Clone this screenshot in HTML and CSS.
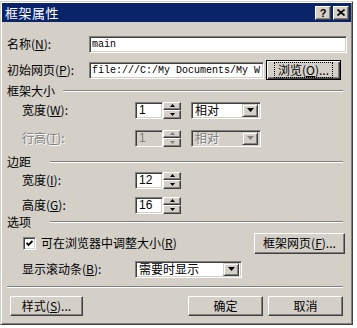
FILE: index.html
```html
<!DOCTYPE html>
<html>
<head>
<meta charset="utf-8">
<title>框架属性</title>
<link rel="stylesheet" href="styles.css">
</head>
<body>
<div class="window">
  <div class="titlebar">
    <span class="title">框架属性</span>
    <div class="tbtns">
      <div class="tbtn help">?</div>
      <div class="tbtn close">
        <svg width="8" height="7" viewBox="0 0 8 7"><path d="M0.5 0.5 L7.5 6.5 M7.5 0.5 L0.5 6.5" stroke="#000" stroke-width="1.6" fill="none"/></svg>
      </div>
    </div>
  </div>
  <div class="content">
    <div class="row r-name">
      <span class="lbl lbl-top">名称(<u>N</u>):</span>
      <div class="field text-field f-name">main</div>
    </div>
    <div class="row r-page">
      <span class="lbl lbl-top">初始网页(<u>P</u>):</span>
      <div class="field text-field f-page">file:///C:/My Documents/My W</div>
      <div class="btn default b-browse"><span class="focus">浏览(<u>O</u>)...</span></div>
    </div>

    <div class="group g-size">
      <span class="group-label">框架大小</span>
      <span class="group-line"></span>
    </div>
    <div class="row r-w">
      <span class="lbl lbl-sub">宽度(<u>W</u>):</span>
      <div class="field num-field">1</div>
      <div class="spinner">
        <div class="spin-btn"><svg width="5" height="3" viewBox="0 0 5 3"><path d="M2.5 0 L5 3 L0 3 Z" fill="#000"/></svg></div>
        <div class="spin-btn"><svg width="5" height="3" viewBox="0 0 5 3"><path d="M0 0 L5 0 L2.5 3 Z" fill="#000"/></svg></div>
      </div>
      <div class="field combo c-unit">
        <span class="combo-text">相对</span>
        <div class="drop-btn"><svg width="7" height="4" viewBox="0 0 7 4"><path d="M0 0 L7 0 L3.5 4 Z" fill="#000"/></svg></div>
      </div>
    </div>
    <div class="row r-h disabled">
      <span class="lbl lbl-sub">行高(<u>T</u>):</span>
      <div class="field num-field">1</div>
      <div class="spinner">
        <div class="spin-btn"><svg width="5" height="3" viewBox="0 0 5 3"><path d="M2.5 0 L5 3 L0 3 Z" fill="#808080"/></svg></div>
        <div class="spin-btn"><svg width="5" height="3" viewBox="0 0 5 3"><path d="M0 0 L5 0 L2.5 3 Z" fill="#808080"/></svg></div>
      </div>
      <div class="field combo c-unit">
        <span class="combo-text">相对</span>
        <div class="drop-btn"><svg width="7" height="4" viewBox="0 0 7 4"><path d="M0 0 L7 0 L3.5 4 Z" fill="#808080"/></svg></div>
      </div>
    </div>

    <div class="group g-margin">
      <span class="group-label">边距</span>
      <span class="group-line"></span>
    </div>
    <div class="row r-mw">
      <span class="lbl lbl-sub">宽度(<u>I</u>):</span>
      <div class="field num-field">12</div>
      <div class="spinner">
        <div class="spin-btn"><svg width="5" height="3" viewBox="0 0 5 3"><path d="M2.5 0 L5 3 L0 3 Z" fill="#000"/></svg></div>
        <div class="spin-btn"><svg width="5" height="3" viewBox="0 0 5 3"><path d="M0 0 L5 0 L2.5 3 Z" fill="#000"/></svg></div>
      </div>
    </div>
    <div class="row r-mh">
      <span class="lbl lbl-sub">高度(<u>G</u>):</span>
      <div class="field num-field">16</div>
      <div class="spinner">
        <div class="spin-btn"><svg width="5" height="3" viewBox="0 0 5 3"><path d="M2.5 0 L5 3 L0 3 Z" fill="#000"/></svg></div>
        <div class="spin-btn"><svg width="5" height="3" viewBox="0 0 5 3"><path d="M0 0 L5 0 L2.5 3 Z" fill="#000"/></svg></div>
      </div>
    </div>

    <div class="group g-opts">
      <span class="group-label">选项</span>
      <span class="group-line"></span>
    </div>
    <div class="row r-check">
      <div class="checkbox">
        <svg width="7" height="7" viewBox="0 0 7 7"><path d="M0.5 3 L2.5 5 L6.5 1" stroke="#000" stroke-width="1.8" fill="none"/></svg>
      </div>
      <span class="check-label">可在浏览器中调整大小(<u>R</u>)</span>
      <div class="btn b-frame">框架网页(<u>F</u>)...</div>
    </div>
    <div class="row r-scroll">
      <span class="lbl lbl-sub">显示滚动条(<u>B</u>):</span>
      <div class="field combo c-scroll">
        <span class="combo-text">需要时显示</span>
        <div class="drop-btn"><svg width="7" height="4" viewBox="0 0 7 4"><path d="M0 0 L7 0 L3.5 4 Z" fill="#000"/></svg></div>
      </div>
    </div>

    <div class="sep"></div>

    <div class="row r-buttons">
      <div class="btn b-style">样式(<u>S</u>)...</div>
      <div class="btn b-ok">确定</div>
      <div class="btn b-cancel">取消</div>
    </div>
  </div>
</div>
</body>
</html>
```

FILE: styles.css
```css
html, body {
  margin: 0;
  padding: 0;
  background: #ffffff;
}
body {
  font-family: "Noto Sans CJK SC", "Noto Sans", sans-serif;
  font-size: 12px;
  color: #000;
}
u { text-decoration: underline; text-underline-offset: 1px; }

.window {
  box-sizing: border-box;
  width: 353px;
  height: 324px;
  margin-top: 1px;
  background: #d4d0c8;
  border: 1px solid;
  border-color: #d4d0c8 #404040 #404040 #d4d0c8;
  box-shadow: inset 1px 1px #ffffff, inset -1px -1px #808080;
  padding: 1px;
  display: flex;
  flex-direction: column;
}

.titlebar {
  height: 19px;
  background: #0a246a;
  display: flex;
  align-items: center;
  justify-content: space-between;
  padding: 0 2px 0 3px;
}
.title {
  color: #fff;
  font-size: 13px;
  line-height: 19px;
  letter-spacing: 0.5px;
}
.tbtns { display: flex; gap: 2px; }
.tbtn {
  box-sizing: border-box;
  width: 16px;
  height: 14px;
  background: #d4d0c8;
  border: 1px solid;
  border-color: #fff #404040 #404040 #fff;
  box-shadow: inset -1px -1px #808080;
  display: flex;
  align-items: center;
  justify-content: center;
}
.tbtn.help {
  font-family: "Liberation Sans", sans-serif;
  font-weight: bold;
  font-size: 11px;
  line-height: 12px;
}

.content {
  display: flex;
  flex-direction: column;
  padding: 0 4px 0 5px;
}

.row {
  display: flex;
  align-items: center;
  height: 20px;
}
.r-name { margin-top: 12px; }
.r-page { margin-top: 6px; }
.g-size { margin-top: 4px; }
.r-w { margin-top: 2px; }
.r-h { margin-top: 8px; }
.g-margin { margin-top: 7px; }
.r-mw { margin-top: 1px; }
.r-mh { margin-top: 5px; }
.g-opts { margin-top: 0; }
.r-check { margin-top: 3px; height: 22px; }
.r-scroll { margin-top: 5px; }
.r-buttons { margin-top: 8px; }

.lbl { white-space: nowrap; line-height: 14px; }
.lbl-top { width: 82px; }
.lbl-sub { width: 113px; padding-left: 15px; }

.field {
  box-sizing: border-box;
  height: 17px;
  background: #fff;
  border: 1px solid;
  border-color: #808080 #fff #fff #808080;
  box-shadow: inset 1px 1px #404040, inset -1px -1px #d4d0c8;
  display: flex;
  align-items: center;
  overflow: hidden;
  white-space: nowrap;
}
.text-field {
  font-family: "Liberation Mono", monospace;
  font-size: 10px;
  padding-left: 2px;
}
.f-name { width: 258px; }
.f-page { width: 175px; }

.num-field {
  width: 28px;
  font-family: "Liberation Sans", sans-serif;
  font-size: 12px;
  padding-left: 3px;
}

.spinner {
  width: 18px;
  height: 17px;
  display: flex;
  flex-direction: column;
}
.spin-btn {
  box-sizing: border-box;
  flex: 1;
  background: #d4d0c8;
  border: 1px solid;
  border-color: #fff #404040 #404040 #fff;
  box-shadow: inset -1px -1px #808080;
  display: flex;
  align-items: center;
  justify-content: center;
}

.combo { padding: 0 2px 0 3px; justify-content: space-between; }
.c-unit { width: 70px; margin-left: 10px; }
.c-scroll { width: 107px; }
.combo-text { line-height: 14px; }
.drop-btn {
  box-sizing: border-box;
  width: 16px;
  height: 13px;
  background: #d4d0c8;
  border: 1px solid;
  border-color: #d4d0c8 #404040 #404040 #d4d0c8;
  box-shadow: inset 1px 1px #fff, inset -1px -1px #808080;
  display: flex;
  align-items: center;
  justify-content: center;
}

.disabled .lbl { color: #808080; text-shadow: 1px 1px #fff; }
.disabled .field { background: #d4d0c8; color: #808080; }
.disabled .combo-text { text-shadow: 1px 1px #fff; }

.group {
  display: flex;
  align-items: center;
  height: 14px;
}
.group-label { min-width: 35px; margin-right: 8px; line-height: 14px; }
.group-line {
  flex: 1;
  height: 0;
  border-top: 1px solid #808080;
  border-bottom: 1px solid #fff;
  margin-right: 4px;
}

.btn {
  box-sizing: border-box;
  height: 20px;
  background: #d4d0c8;
  border: 1px solid;
  border-color: #fff #404040 #404040 #fff;
  box-shadow: inset -1px -1px #808080;
  display: flex;
  align-items: center;
  justify-content: center;
  white-space: nowrap;
  line-height: 14px;
}
.btn.default {
  border-color: #000;
  box-shadow: inset 1px 1px #fff, inset -1px -1px #404040, inset -2px -2px #808080;
}
.focus {
  border: 1px dotted #000;
  padding: 1px 3px;
  line-height: 12px;
}
.b-browse { width: 75px; margin-left: 2px; height: 20px; }

.checkbox {
  box-sizing: border-box;
  width: 13px;
  height: 13px;
  margin-left: 16px;
  background: #fff;
  border: 1px solid;
  border-color: #808080 #fff #fff #808080;
  box-shadow: inset 1px 1px #404040, inset -1px -1px #d4d0c8;
  display: flex;
  align-items: center;
  justify-content: center;
}
.check-label { margin-left: 5px; line-height: 14px; }
.b-frame { width: 91px; height: 21px; margin-left: auto; margin-right: 2px; }

.sep {
  margin-top: 7px;
  margin-right: 4px;
  border-top: 1px solid #808080;
  border-bottom: 1px solid #fff;
}

.b-style { width: 73px; margin-left: 3px; }
.b-ok { width: 75px; margin-left: auto; }
.b-cancel { width: 75px; margin-left: 5px; margin-right: 4px; }
```
